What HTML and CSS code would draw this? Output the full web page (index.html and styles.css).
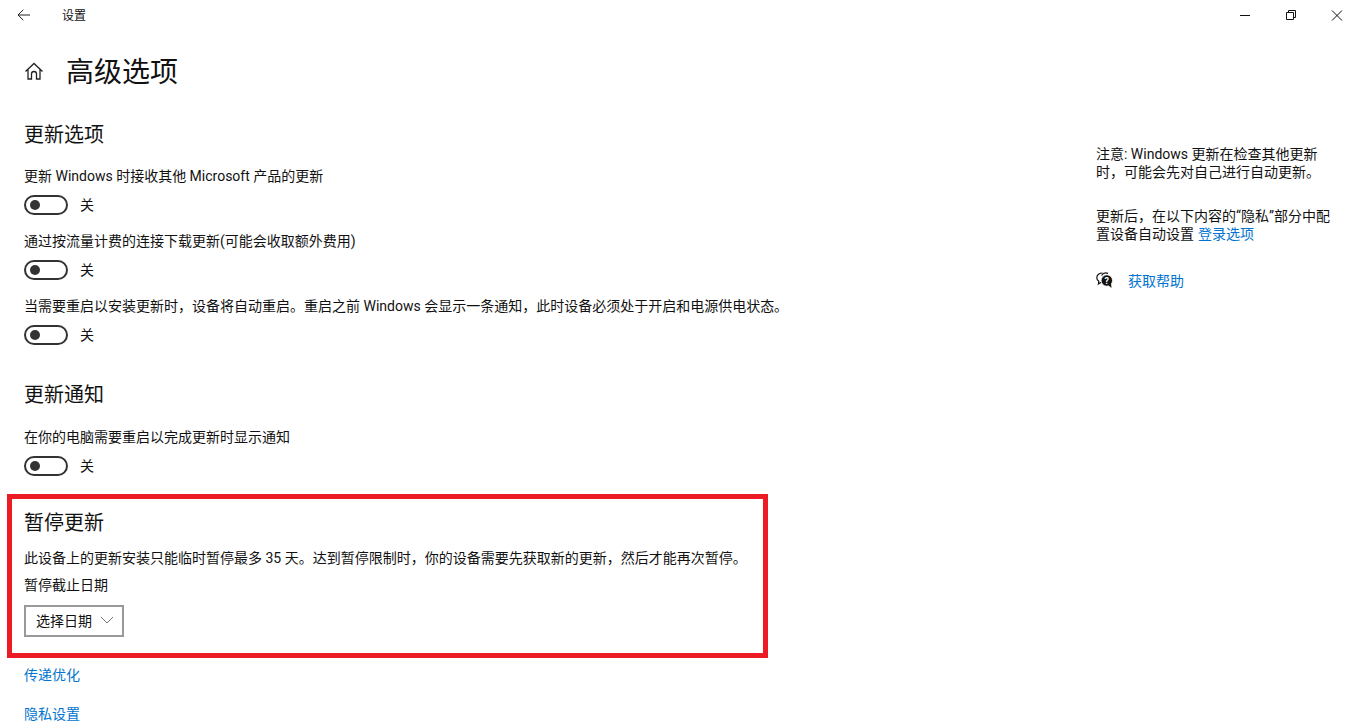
FILE: index.html
```html
<!DOCTYPE html>
<html lang="zh-CN">
<head>
<meta charset="utf-8">
<title>设置</title>
<link rel="stylesheet" href="styles.css">
</head>
<body>
<header class="titlebar">
  <div class="title-left">
    <svg class="back" width="16" height="16" viewBox="0 0 16 16"><path d="M14 8H2.3M7.3 2.8 2 8l5.3 5.2" fill="none" stroke="#222" stroke-width="1"/></svg>
    <span class="app-name">设置</span>
  </div>
  <div class="window-controls">
    <svg class="win-btn" width="46" height="32" viewBox="0 0 46 32"><path d="M18 15.5H28" stroke="#111" stroke-width="1"/></svg>
    <svg class="win-btn" width="46" height="32" viewBox="0 0 46 32"><path d="M18.5 12.5h7v7h-7zM20.5 12.5v-2h7v7h-2" fill="none" stroke="#111" stroke-width="1"/></svg>
    <svg class="win-btn" width="46" height="32" viewBox="0 0 46 32"><path d="M18 10.5 28 20.5M28 10.5 18 20.5" stroke="#111" stroke-width="1"/></svg>
  </div>
</header>
<div class="page">
  <main class="main">
    <div class="page-head">
      <svg class="home" width="20" height="20" viewBox="0 0 20 20"><path d="M1.5 10.5 10 2.5l8.5 8M4 8.5V18h3.5v-5a2.5 2.5 0 0 1 5 0v5H16V8.5" fill="none" stroke="#222" stroke-width="1.3"/></svg>
      <h1 class="page-title">高级选项</h1>
    </div>
    <h2 class="section-title first">更新选项</h2>
    <p class="setting-label">更新 Windows 时接收其他 Microsoft 产品的更新</p>
    <div class="toggle-row"><span class="toggle"></span><span class="toggle-text">关</span></div>
    <p class="setting-label next">通过按流量计费的连接下载更新(可能会收取额外费用)</p>
    <div class="toggle-row"><span class="toggle"></span><span class="toggle-text">关</span></div>
    <p class="setting-label next">当需要重启以安装更新时，设备将自动重启。重启之前 Windows 会显示一条通知，此时设备必须处于开启和电源供电状态。</p>
    <div class="toggle-row"><span class="toggle"></span><span class="toggle-text">关</span></div>
    <h2 class="section-title notify">更新通知</h2>
    <p class="setting-label">在你的电脑需要重启以完成更新时显示通知</p>
    <div class="toggle-row"><span class="toggle"></span><span class="toggle-text">关</span></div>
    <section class="pause-box">
      <h2 class="section-title pause">暂停更新</h2>
      <p class="setting-label pause-text">此设备上的更新安装只能临时暂停最多 35 天。达到暂停限制时，你的设备需要先获取新的更新，然后才能再次暂停。</p>
      <p class="setting-label pause-date">暂停截止日期</p>
      <div class="select">
        <span>选择日期</span>
        <svg width="14" height="8" viewBox="0 0 14 8"><path d="M1 1 7 7l6-6" fill="none" stroke="#777" stroke-width="1"/></svg>
      </div>
    </section>
    <a class="link block-link">传递优化</a>
    <a class="link block-link second">隐私设置</a>
  </main>
  <aside class="aside">
    <p class="note">注意: Windows 更新在检查其他更新时，可能会先对自己进行自动更新。</p>
    <div class="note gap">
      <p>更新后，在以下内容的“隐私”部分中配</p>
      <p class="note-line"><span>置设备自动设置</span><a class="link">登录选项</a></p>
    </div>
    <div class="help">
      <svg width="17" height="16" viewBox="0 0 17 16"><path d="M6.5 1C3.3 1 .8 3 .8 5.7c0 1.5.8 2.8 2 3.6L2.4 12l2.8-1.8" fill="none" stroke="#111" stroke-width="1.2"/><path d="M5.5 3.5A5.5 5.5 0 0 1 12 1.4" fill="none" stroke="#111" stroke-width="1.2"/><circle cx="10.8" cy="8.5" r="5.7" fill="#111" stroke="#fff" stroke-width=".8"/><path d="M12.5 13.5l3 2.5-.5-4.5z" fill="#111"/><text class="help-mark" x="10.8" y="11.6" text-anchor="middle">?</text></svg>
      <a class="link">获取帮助</a>
    </div>
  </aside>
</div>
</body>
</html>
```
FILE: styles.css
```css
* { box-sizing: border-box; }
html, body { margin: 0; height: 100%; }
body {
  width: 1360px;
  height: 726px;
  overflow: hidden;
  background: #fff;
  color: #111;
  font-family: Roboto, "Noto Sans CJK SC", sans-serif;
  font-size: 14px;
}
p, h1, h2 { margin: 0; font-weight: 400; }
.titlebar { display: flex; justify-content: space-between; height: 32px; }
.title-left { display: flex; align-items: center; height: 32px; }
.back { margin-left: 16px; margin-top: -2px; }
.app-name { margin-left: 30px; font-size: 12px; line-height: 32px; }
.window-controls { display: flex; }
.win-btn { display: block; }
.page { display: flex; justify-content: space-between; }
.main { width: 1000px; padding-left: 24px; }
.page-head { display: flex; align-items: center; height: 48px; margin-top: 15px; }
.home { margin-right: 22px; }
.page-title { margin-top: 4px; font-size: 28px; line-height: 48px; }
.section-title { font-size: 20px; line-height: 28px; }
.section-title.first { margin-top: 26px; }
.section-title.notify { margin-top: 35px; }
.setting-label { font-size: 14px; line-height: 20px; white-space: nowrap; }
.section-title + .setting-label { margin-top: 17px; }
.section-title.notify + .setting-label { margin-top: 18px; }
.setting-label.next { margin-top: 15px; }
.toggle-row { display: flex; align-items: center; height: 24px; margin-top: 6px; }
.toggle {
  position: relative;
  width: 44px;
  height: 20px;
  margin-top: 2px;
  border: 2px solid #333;
  border-radius: 10px;
}
.toggle::after {
  content: "";
  position: absolute;
  left: 4px;
  top: 3px;
  width: 10px;
  height: 10px;
  border-radius: 50%;
  background: #333;
}
.toggle-text { margin-left: 12px; font-size: 14px; }
.pause-box {
  width: 761px;
  height: 164px;
  margin: 17px 0 0 -17px;
  padding: 10px 0 0 12px;
  border: 5px solid #ed1c24;
}
.section-title.pause + .setting-label { margin-top: 11px; }
.pause-date { margin-top: 7px; }
.select {
  display: flex;
  align-items: center;
  justify-content: space-between;
  width: 100px;
  height: 32px;
  margin-top: 10px;
  padding: 0 8px 2px 10px;
  border: 2px solid #999;
  font-size: 14px;
}
.link { color: #0074d0; font-size: 14px; }
.block-link { display: block; line-height: 20px; margin-top: 7px; }
.block-link.second { margin-top: 19px; }
.aside { width: 264px; padding-top: 113px; }
.note { width: 240px; font-size: 14px; line-height: 18px; white-space: normal; }
.note.gap { margin-top: 26px; }
.note-line { display: flex; gap: 4px; }
.help { display: flex; align-items: center; gap: 15px; margin-top: 27px; height: 20px; }
.help-mark { fill: #fff; font-size: 9px; font-weight: 700; }
```
